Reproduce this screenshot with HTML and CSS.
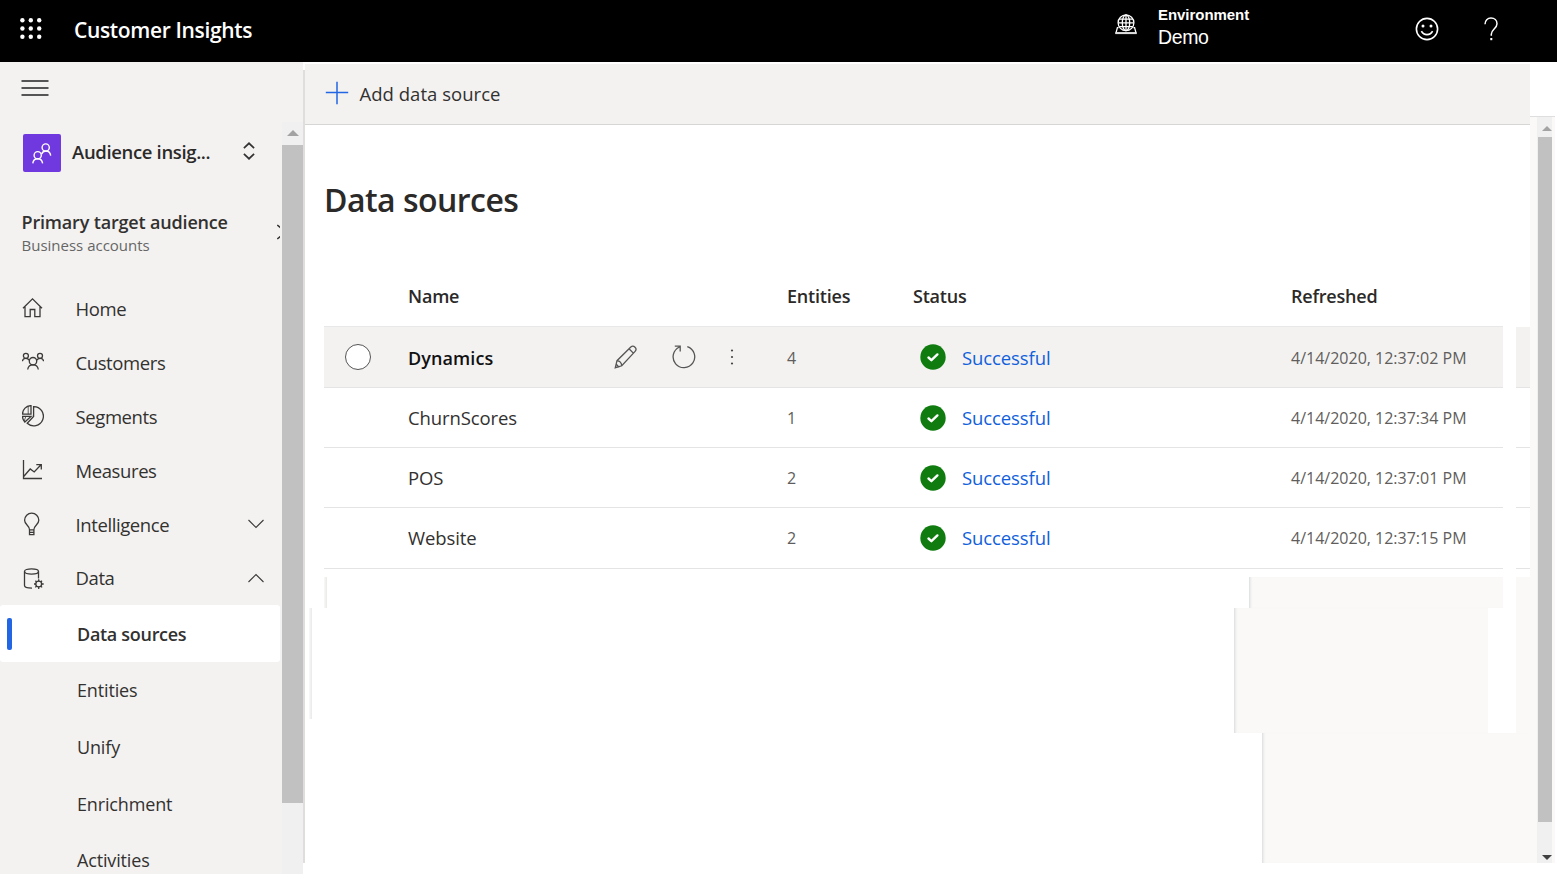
FILE: index.html
```html
<!DOCTYPE html>
<html lang="en">
<head>
<meta charset="utf-8">
<title>Customer Insights</title>
<link rel="stylesheet" href="styles.css">
</head>
<body>
<header class="topbar">
  <svg class="waffle" width="22" height="22" viewBox="0 0 22 22" fill="#fff"><circle cx="2.4" cy="2.2" r="2.2"/><circle cx="10.8" cy="2.2" r="2.2"/><circle cx="19.2" cy="2.2" r="2.2"/><circle cx="2.4" cy="10.5" r="2.2"/><circle cx="10.8" cy="10.5" r="2.2"/><circle cx="19.2" cy="10.5" r="2.2"/><circle cx="2.4" cy="18.8" r="2.2"/><circle cx="10.8" cy="18.8" r="2.2"/><circle cx="19.2" cy="18.8" r="2.2"/></svg>
  <div class="brand">Customer Insights</div>
  <svg class="globe" width="22" height="21" viewBox="0 0 22 21" fill="none" stroke="#fff" stroke-width="1.3"><circle cx="11" cy="8.8" r="7.9"/><ellipse cx="11" cy="8.8" rx="3.7" ry="7.9"/><path d="M11 1v15.5M4.2 5.2h13.6M3.2 8.8h15.6M4.2 12.6h13.6M3.6 13.6H2.4L1 18.8h20l-1.4-5.2h-1.2"/><path d="M.3 19.2h21.4" stroke="#ddd" stroke-width="1.8"/></svg>
  <div class="environment"><span class="env-label">Environment</span><span class="env-name">Demo</span></div>
  <svg class="smile" width="24" height="24" viewBox="0 0 24 24" fill="none" stroke="#fff" stroke-width="1.6"><circle cx="12" cy="12" r="10.6"/><path d="M6.4 14.2c2.4 4.6 8.800 4.600 11.200 0"/><circle cx="8" cy="9" r="1.500" fill="#fff" stroke="none"/><circle cx="16" cy="9" r="1.500" fill="#fff" stroke="none"/></svg>
  <svg class="help" width="14" height="24" viewBox="0 0 14 24" fill="none" stroke="#fff" stroke-width="1.500"><path d="M1 7.200C1 3.400 3.600 1 7 1s6 2.300 6 5.700c0 5-5.700 5.600-5.700 10.500v1.500"/><path d="M7.300 21v2.200" stroke-width="2"/></svg>
</header>

<div class="shell">
  <nav class="sidebar">
    <div class="menu-toggle"><svg width="28" height="18" viewBox="0 0 28 18" stroke="#555" stroke-width="2"><path d="M.5 2h27M.5 9h27M.5 16h27"/></svg></div>
    <div class="sidebar-body">
      <div class="sidebar-main">
        <div class="product">
          <div class="product-icon"><svg width="20" height="21" viewBox="0 0 20 21" fill="none" stroke="#fff" stroke-width="1.400"><circle cx="13.700" cy="4.500" r="3.600"/><circle cx="5.700" cy="12.200" r="3.600"/><path d="M9.700 11.200c.5-2 2-3.200 4.100-3.200 2.800 0 4.500 1.800 4.900 4.700M.8 20.400c.3-2.900 2.100-4.600 4.900-4.600s4.500 1.700 4.900 4.600"/></svg></div>
          <span class="product-name">Audience insig...</span>
          <svg class="sorter" width="12" height="18" viewBox="0 0 12 18" fill="none" stroke="#333" stroke-width="1.700"><path d="M.9 6.200L6 1.300l5.100 4.900M.9 11.800L6 16.700l5.100-4.900"/></svg>
        </div>
        <div class="audience">
          <div><div class="audience-name">Primary target audience</div><div class="audience-type">Business accounts</div></div>
          <svg class="clipped" width="3" height="16" viewBox="0 0 3 16" fill="none" stroke="#333" stroke-width="1.500"><path d="M.3 1l4.700 4M.3 15L5 11"/></svg>
        </div>
        <a class="nav"><svg width="22" height="22" viewBox="0 0 22 22"><path d="M1 11.200L10.500 1.800l9.500 9.400M3 9.800v9.900h5.200v-7.200h4.600v7.200H18V9.800"/></svg><span>Home</span></a>
        <a class="nav"><svg width="22" height="22" viewBox="0 0 22 22"><circle cx="3.900" cy="4.800" r="2.500"/><circle cx="18" cy="4.800" r="2.500"/><circle cx="11" cy="10.200" r="3.700"/><path d="M.4 10.300c.2-2 1.500-3 3.500-3 1.600 0 2.700.7 3.200 2M21.600 10.300c-.2-2-1.500-3-3.500-3-1.600 0-2.700.7-3.200 2M5.700 18.500c.4-3 2.500-4.600 5.300-4.600s4.900 1.600 5.300 4.600"/></svg><span>Customers</span></a>
        <a class="nav"><svg width="22" height="22" viewBox="0 0 22 22"><path d="M11.600 1.600a9.600 9.600 0 1 1-6.400 16.600l6.400-6.800zM9 .6v8.600H.5C.6 4.300 4.200.8 9 .6zM.5 11.400H9L2.800 17C1.400 15.500.5 13.500.5 11.400z"/><path d="M6.200 1.300v7.900M3.800 11.500l-1.600 4.500" stroke-width=".8"/></svg><span>Segments</span></a>
        <a class="nav"><svg width="22" height="22" viewBox="0 0 22 22"><path d="M1.500 1v18.500H20M1.700 17.500L8.200 10l4 3L19 5.800M14.300 5.600h5v4.800"/></svg><span>Measures</span></a>
        <a class="nav"><svg width="22" height="24" viewBox="0 0 22 24"><path d="M7.500 17.800c0-4.500-4.900-5-4.900-9.500a7.100 7.100 0 0 1 14.200 0c0 4.500-4.900 5-4.900 9.500zM7.500 17.800v4.900h4.400v-4.900M7.500 20.300h4.400"/></svg><span>Intelligence</span><svg class="chev" width="16" height="10" viewBox="0 0 16 10"><path d="M.5 1L8 8.500 15.500 1"/></svg></a>
        <a class="nav"><svg width="22" height="22" viewBox="0 0 22 22"><ellipse cx="9.500" cy="4.500" rx="7" ry="2.600"/><path d="M2.500 4.500v14c0 1.500 2.800 2.600 7.500 2.600M16.500 4.500v7"/><circle cx="16.700" cy="17" r="2.900"/><path d="M16.700 12.300v2M16.700 19.800v2.200M12 17h2M19.500 17h2.200M13.400 13.700l1.300 1.300M18.700 19l1.400 1.400M20 13.700l-1.300 1.300M14.700 19l-1.400 1.400"/></svg><span>Data</span><svg class="chev" width="16" height="10" viewBox="0 0 16 10"><path d="M.5 9L8 1.500 15.500 9"/></svg></a>
        <a class="sub active">Data sources</a>
        <a class="sub">Entities</a>
        <a class="sub">Unify</a>
        <a class="sub">Enrichment</a>
        <a class="sub">Activities</a>
      </div>
      <div class="side-scroll"><div class="arrow-up"></div><div class="thumb"></div></div>
    </div>
  </nav>
  <div class="divider"></div>

  <main class="content">
    <div class="toolbar"><svg width="24" height="24" viewBox="0 0 24 24" stroke="#2266e3" stroke-width="1.500"><path d="M.8 11.500h22.400M12 .8v22.400"/></svg><span>Add data source</span></div>
    <h1 class="title">Data sources</h1>
    <div class="table">
      <div class="row head"><span></span><span>Name</span><span></span><span>Entities</span><span>Status</span><span>Refreshed</span></div>
      <div class="line"><div class="row selected">
        <span class="radio"></span><span class="name">Dynamics</span>
        <span class="actions">
          <svg width="24" height="24" viewBox="0 0 24 24"><path d="M1.300 22.700l1.700-7L16.800 2c1.300-1.200 2.900-1.100 4.200.2s1.300 2.900.1 4.200L7.800 20.800zM3 15.700c2.400.3 4.500 2.400 4.800 5.100M15 3.800l4.600 4.600M1.300 22.700l3.400-.9-2.400-2.500"/></svg>
          <svg width="24" height="24" viewBox="0 0 24 24"><path d="M15.300 1.600A10.800 10.800 0 1 1 7.500 2M2.800 1.100h5.400v5.300"/></svg>
          <svg width="4" height="16" viewBox="0 0 4 16" class="dots"><circle cx="2" cy="1.500" r="1.100"/><circle cx="2" cy="8" r="1.100"/><circle cx="2" cy="14.500" r="1.100"/></svg>
        </span>
        <span class="count">4</span><span class="status"><svg width="26" height="26" viewBox="0 0 26 26"><circle cx="13" cy="13" r="12.700"/><path d="M8.500 13.500l2.900 2.700 6-5.800"/></svg>Successful</span><span class="date">4/14/2020, 12:37:02 PM</span>
      </div><div class="stub selected"></div></div>
      <div class="line"><div class="row"><span></span><span>ChurnScores</span><span></span><span class="count">1</span><span class="status"><svg width="26" height="26" viewBox="0 0 26 26"><circle cx="13" cy="13" r="12.700"/><path d="M8.500 13.500l2.900 2.700 6-5.800"/></svg>Successful</span><span class="date">4/14/2020, 12:37:34 PM</span></div><div class="stub"></div></div>
      <div class="line"><div class="row"><span></span><span>POS</span><span></span><span class="count">2</span><span class="status"><svg width="26" height="26" viewBox="0 0 26 26"><circle cx="13" cy="13" r="12.700"/><path d="M8.500 13.500l2.900 2.700 6-5.800"/></svg>Successful</span><span class="date">4/14/2020, 12:37:01 PM</span></div><div class="stub"></div></div>
      <div class="line"><div class="row"><span></span><span>Website</span><span></span><span class="count">2</span><span class="status"><svg width="26" height="26" viewBox="0 0 26 26"><circle cx="13" cy="13" r="12.700"/><path d="M8.500 13.500l2.900 2.700 6-5.800"/></svg>Successful</span><span class="date">4/14/2020, 12:37:15 PM</span></div><div class="stub"></div></div>
    </div>
    <div class="panels">
      <div class="band band-a"><i class="edge"></i><div class="panel"></div><div class="strip"></div></div>
      <div class="band band-b"><i class="edge"></i><div class="panel"></div><div class="strip"></div></div>
      <div class="band band-c"><div class="panel"></div></div>
    </div>
  </main>

  <div class="page-scroll">
    <div class="track"><div class="arrow-up"></div><div class="thumb"></div><div class="arrow-down"></div></div>
  </div>
</div>
</body>
</html>
```

FILE: styles.css
```css
* { box-sizing: border-box; }
body { margin: 0; width: 1561px; height: 874px; overflow: hidden; background: #fff; color: #323130; font: 18.5px/24px "Open Sans", "Noto Sans", sans-serif; }
svg { display: block; flex: none; }

.topbar { display: flex; align-items: flex-start; width: 1557px; height: 62px; background: #000; color: #fff; }
.waffle { margin: 18px 0 0 20px; }
.brand { width: 1041px; margin: 15px 0 0 32px; font-size: 21px; font-weight: 600; line-height: 30px; letter-spacing: -0.35px; }
.globe { margin-top: 14px; }
.environment { display: flex; flex-direction: column; width: 257px; margin: 6px 0 0 21px; font-family: "Liberation Sans", Arial, sans-serif; }
.env-label { font-size: 15px; font-weight: 700; line-height: 18px; letter-spacing: -0.05px; }
.env-name { font-size: 19.5px; line-height: 26px; letter-spacing: -0.4px; }
.smile { margin-top: 17px; }
.help { margin: 17px 0 0 45px; }

.shell { display: flex; height: 812px; }
.sidebar { width: 303px; background: #f3f2f1; overflow: hidden; }
.menu-toggle { height: 60px; padding: 17px 0 0 21px; }
.sidebar-body { display: flex; height: 752px; }
.sidebar-main { width: 282px; }
.product { display: flex; align-items: center; height: 38px; margin: 12px 0 0 23px; }
.product-icon { display: grid; place-items: center; width: 38px; height: 38px; border-radius: 2px; background: #7039df; }
.product-name { width: 171px; margin: -2px 0 0 11px; font-size: 18.5px; font-weight: 600; letter-spacing: -0.35px; color: #2b2a29; white-space: nowrap; }
.sorter { margin-top: -4px; }
.audience { display: flex; justify-content: space-between; height: 110px; padding: 38px 2px 0 21.5px; }
.audience-name { font-weight: 600; font-size: 18px; line-height: 24px; white-space: nowrap; letter-spacing: -0.17px; }
.audience-type { color: #666; font-size: 15px; line-height: 22px; }
.clipped { margin-top: 14px; }
.nav { display: flex; align-items: center; height: 53.9px; padding-left: 22px; letter-spacing: -0.4px; }
.nav svg { margin: -1px 0 0 -0.5px; fill: none; stroke: #3b3a39; stroke-width: 1.3; }
.nav span { width: 172.5px; margin-left: 32px; }
.nav .chev { stroke-width: 1.1; }
.sub { display: flex; align-items: center; height: 56.7px; padding-left: 77px; font-size: 18px; letter-spacing: -0.15px; }
.sub.active { width: 280px; padding-left: 7px; border-radius: 3px; background: #fff; font-weight: 600; letter-spacing: -0.3px; }
.sub.active::before { content: ""; width: 5px; height: 32px; margin-right: 65px; border-radius: 2px; background: #2266e3; }

.side-scroll { width: 21px; background: #f0f0f0; padding-top: 8px; }
.arrow-up { width: 0; margin: 0 auto; border: 6px solid transparent; border-top: 0; border-bottom: 6px solid #a3a3a3; }
.side-scroll .thumb { height: 658px; margin-top: 9px; background: #c1c1c1; }
.divider { width: 2px; height: 793px; margin-top: 8px; background: #dfdedd; }

.content { width: 1225px; }
.toolbar { display: flex; align-items: center; height: 61px; margin-top: 2px; padding: 0 0 2px 20px; background: #f3f2f1; border-bottom: 1px solid #d6d6d4; }
.toolbar span { margin: 2px 0 0 10.5px; font-size: 18.5px; letter-spacing: 0.03px; }
.title { margin: 55px 0 0 19px; font-size: 32px; line-height: 40px; font-weight: 600; letter-spacing: -0.53px; color: #2b2a29; }
.table { padding-left: 19px; }
.row { display: grid; grid-template-columns: 84px 206px 173px 126px 378px 1fr; align-items: center; width: 1179px; height: 60.2px; padding-top: 1px; border-bottom: 1px solid #e4e4e4; letter-spacing: -0.1px; }
.row.head { height: 107px; padding-top: 46px; border-bottom: 1px solid #e8e8e8; font-size: 18px; font-weight: 600; letter-spacing: -0.2px; color: #2b2a29; }
.row.selected { height: 61px; }
.line { display: flex; justify-content: space-between; }
.stub { width: 14px; border-bottom: 1px solid #e4e4e4; }
.selected { background: #f3f2f1; }
.radio { width: 26px; height: 26px; margin: -1px 0 0 20.5px; border: 1.5px solid #555; border-radius: 50%; background: #fff; }
.name { font-weight: 600; font-size: 18px; letter-spacing: 0.1px; color: #111; }
.actions { display: flex; align-items: center; margin-top: -1px; }
.actions svg { fill: none; stroke: #555; stroke-width: 1.3; margin: 0 34.5px 0 -0.5px; }
.actions .dots { fill: #444; stroke: none; }
.count, .date { color: #5f5e5c; font-size: 16px; letter-spacing: 0; }
.status { display: flex; align-items: center; color: #1160dc; }
.status svg { margin: -1px 16.5px 0 6.5px; fill: #107c10; }
.status path { fill: none; stroke: #fff; stroke-width: 2.4; stroke-linecap: round; stroke-linejoin: round; }

.panels { margin-top: 8.4px; }
.band { display: flex; }
.edge { width: 3px; background: linear-gradient(90deg, #faf9f8, #e9e9e9); }
.panel { background: #faf9f8; border-left: 1px solid #e2e3e3; box-shadow: inset 2px 0 2px -1px #e8e8e8; }
.strip { width: 14px; margin-left: auto; background: #faf9f8; }
.band-a { height: 31px; padding-left: 19px; }
.band-a .panel { width: 254px; margin-left: 922px; }
.band-b { height: 125px; padding-left: 4px; }
.band-b .edge { height: 111px; }
.band-b .panel { width: 254px; margin-left: 922px; }
.band-c { height: 130px; }
.band-c .panel { width: 268px; margin-left: 957px; }

.page-scroll { width: 25px; height: 747px; margin-top: 54px; padding: 0 3px 0 7px; border-top: 1px solid #dedede; background: #faf9f8; }
.track { display: flex; flex-direction: column; width: 15px; height: 746px; padding-left: 1px; background: #f0f0f0; }
.track .arrow-up { margin: 9px 0 0 4px; border-width: 0 5px 5px; }
.track .thumb { height: 685px; margin-top: 6px; background: #c1c1c1; }
.arrow-down { width: 0; margin: 33px 0 0 4px; border: 5px solid transparent; border-top-color: #404040; border-bottom: 0; }
```
